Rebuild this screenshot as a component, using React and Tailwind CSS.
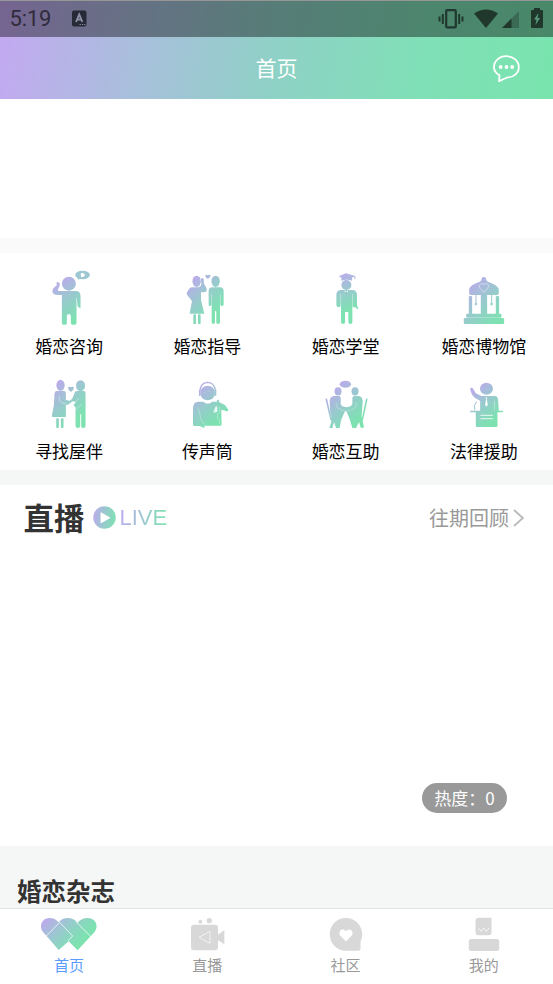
import { useState } from 'react'

function Gradient({ id, x1, y1, x2, y2 }) {
  return (
    <defs>
      <linearGradient id={id} gradientUnits="userSpaceOnUse" x1={x1} y1={y1} x2={x2} y2={y2}>
        <stop offset="0" stopColor="#bbabeb" />
        <stop offset="0.5" stopColor="#97cbcc" />
        <stop offset="0.85" stopColor="#83dcb8" />
        <stop offset="1" stopColor="#7de2b0" />
      </linearGradient>
    </defs>
  )
}

function ConsultIcon() {
  return (
    <svg viewBox="57.4 24 180 180" className="size-[60px]" fill="url(#g-consult)">
      <Gradient id="g-consult" x1="95" y1="75" x2="165" y2="180" />
      <circle cx="147" cy="71" r="21" />
      <path d="M111 66q9 0 9 9l-6 14q-1 4 4 4h50q14 0 14 16v36q-7-2-9-8l-2-24-1 0v76q0 5-6 5h-6q-5 0-5-5v-20q-1-7-6-7t-6 7v20q0 5-5 5h-5q-5 0-5-5v-84h-14q-17-2-14-14 2-8 13-15-2-7 0-10z" />
      <ellipse cx="188" cy="45" rx="22" ry="12.500" fill="#9dc7d1" />
      <path d="M172 50l3 9 9-5z" fill="#9dc7d1" />
      <path d="M183 39h7l6 6-5 6h-8z" fill="#fff" />
    </svg>
  )
}

function GuideIcon() {
  return (
    <svg viewBox="52.1 24 180 180" className="size-[60px]" fill="url(#g-guide)">
      <Gradient id="g-guide" x1="85" y1="70" x2="170" y2="155" />
      <ellipse cx="111" cy="64" rx="12.500" ry="17" />
      <path d="M99 82h18q8-2 8-10l-1-15q4-6 8 0l1 14 8 14q2 10-6 12h-11v22l10 42H90l7-38-15-19q-2-5 1-9l7-10q3-3 9-3z" />
      <rect x="101" y="163" width="8" height="29" rx="2" />
      <rect x="115" y="163" width="8" height="29" rx="2" />
      <path d="M137 47q2-5 7-1 5-4 9 0 1 4-8 11-8-4-8-10z" />
      <ellipse cx="168" cy="64" rx="12.500" ry="17" />
      <path d="M158 82h23q11 0 11 11v40q-1 6-5 6t-5-6v-31h-1v84q0 6-6 6t-5-6v-31q-2-5-4 0v31q0 6-5 6t-5-6v-84h-1v31q0 6-5 6-3 0-3-6V93q0-11 11-11z" />
    </svg>
  )
}

function SchoolIcon() {
  return (
    <svg viewBox="76.9 24 180 180" className="size-[60px]" fill="url(#g-school)">
      <Gradient id="g-school" x1="150" y1="40" x2="188" y2="150" />
      <path d="M145 49l22-9 27 8-9 5v9q-16-5-32 0v-9z" />
      <path d="M192 48h3v9h-3z" />
      <circle cx="168" cy="75" r="15" />
      <path d="M150 90h38q11 1 12 15v33l4 6-2 4-7-6q-7 1-8-3v-38h-1v86q0 5-6 5t-6-5v-30q-6-4-10 0v30q0 5-6 5t-6-5v-86h-1v34q0 7-6 7t-7-6v-31q0-14 12-15z" />
      <path d="M163 90l5 7 5-7v6h-10z" fill="#fff" />
    </svg>
  )
}

function MuseumIcon() {
  return (
    <svg viewBox="71.6 24 180 180" className="size-[60px]" fill="url(#g-museum)">
      <Gradient id="g-museum" x1="110" y1="75" x2="210" y2="180" />
      <path d="M154 60v-4q0-5 7-5t7 5v4q4 6 13 8 18 6 25 18v14q0 5-5 5h-79q-5 0-5-5V86q6-12 24-18 10-2 13-8z" />
      <path d="M147 76q6-9 14-3 9-6 15 3 1 8-15 21-15-12-14-21z" fill="none" stroke="#fff" strokeWidth="1.800" opacity=".7" />
      <rect x="116" y="108" width="10" height="57" rx="3" />
      <rect x="152" y="104" width="19" height="62" rx="3" />
      <rect x="197" y="108" width="10" height="57" rx="3" />
      <path d="M136 104h3v24l3 4-5 5-4-5 3-4zM183 104h3v24l3 4-5 5-4-5 3-4z" />
      <rect x="108" y="161" width="106" height="12" rx="4" />
      <rect x="101" y="174" width="121" height="18" rx="4" />
    </svg>
  )
}

function PartnerIcon() {
  return (
    <svg viewBox="57.4 15 180 180" className="size-[60px]" fill="url(#g-partner)">
      <Gradient id="g-partner" x1="105" y1="50" x2="190" y2="140" />
      <ellipse cx="122" cy="52" rx="12.500" ry="16.500" />
      <ellipse cx="182" cy="53" rx="13.500" ry="16.500" />
      <path d="M111 69h22q5 1 5 6v21l12 2 7-6 8-19q2-4 8-4h18q6 0 6 7v98q0 6-7 6t-6-6v-35h-3v35q0 6-7 6t-7-6v-56l-6-7 7-9-10-2-14 10-6 1v36H99q-4 0-3-4l6-31 2-36q1-7 7-7z" />
      <path d="M117 84l3 16q2 4 9 5l10 2M154 107l13-6 10-9M163 129l24-22" fill="none" stroke="#fff" strokeWidth="1.500" opacity=".7" />
      <rect x="109" y="151" width="8" height="29" rx="3" />
      <rect x="123" y="151" width="8" height="29" rx="3" />
      <path d="M144 59q4-5 9-1 6-4 9 1 0 7-9 13-8-6-9-13z" />
    </svg>
  )
}

function MicIcon() {
  return (
    <svg viewBox="472.1 15 180 180" className="size-[60px]" fill="url(#g-mic)">
      <Gradient id="g-mic" x1="530" y1="60" x2="605" y2="150" />
      <path d="M541 67q2-22 22-24 21 0 24 24" fill="none" stroke="url(#g-mic)" strokeWidth="4" />
      <circle cx="564" cy="75" r="22" />
      <rect x="538" y="65" width="5" height="19" rx="2" />
      <rect x="585" y="65" width="5" height="19" rx="2" />
      <path d="M552 73h8m3-3h10" stroke="#fff" strokeWidth="1" opacity=".5" />
      <path d="M536 101h15q13 12 27 0h14v-4q4-4 6 0v5l18 9 10 14q1 5-5 5l-16-5 1 45q0 3-5 3h-46l-1 7-14-6h-16q-4 0-4-5v-46q0-22 16-22z" />
      <path d="M536 122q8 22 6 29l11 18M600 116v20M594 135v15l5 4v15" fill="none" stroke="#fff" strokeWidth="1.500" opacity=".6" />
      <path d="M581 134l6-18 6-1v17z" fill="#fff" opacity=".8" />
    </svg>
  )
}

function HelpIcon() {
  return (
    <svg viewBox="46.9 15 180 180" className="size-[60px]" fill="url(#g-help)">
      <Gradient id="g-help" x1="95" y1="65" x2="175" y2="155" />
      <ellipse cx="135" cy="49" rx="17" ry="10.500" />
      <ellipse cx="113" cy="70" rx="10.500" ry="12.500" />
      <ellipse cx="164" cy="70" rx="10.500" ry="12.500" />
      <path d="M101 84h16q4 1 4 6v18l4 7 13 3 13-3 5-7V90q0-5 5-6h14q11 1 12 15l-3 44 7 36h-10l-5-17-9 18h-11l-8-26-9-23-3-2-3 2-11 26-4 23h-11l-6-18-5 18h-9l6-19-4-17-1-45q1-14 13-15z" />
      <path d="M78 94l14 60M199 94l-13 60" fill="none" stroke="url(#g-help)" strokeWidth="5" strokeLinecap="round" />
      <path d="M85 105l8 45M192 105l-8 45M107 104l3 15 16 8 10 2M169 104l-4 15-14 8-11 2" fill="none" stroke="#fff" strokeWidth="1.300" opacity=".65" />
    </svg>
  )
}

function LawIcon() {
  return (
    <svg viewBox="461.6 15 180 180" className="size-[60px]" fill="url(#g-law)">
      <Gradient id="g-law" x1="515" y1="65" x2="590" y2="150" />
      <ellipse cx="559" cy="62" rx="19.500" ry="18" />
      <path d="M510 62q3-5 8-1l9 15 17 8h40q9 1 10 11l2 33h12q2 2 0 5h-16v41q0 3-4 3h-57q-4 0-4-3v-41h-16q-3-3 0-5h29V98l-15-8q-13-11-15-28z" />
      <path d="M524 127l-1-15 6-11" fill="none" stroke="url(#g-law)" strokeWidth="3" />
      <path d="M557 88h4l-1 6 3 16-4 6-4-6 3-16z" fill="#fff" />
      <path d="M541 142h37M541 152h37" stroke="#fff" strokeWidth="2.500" />
      <path d="M583 99v29" stroke="#fff" strokeWidth="1.500" opacity=".7" />
    </svg>
  )
}

const MENU = [
  { name: '婚恋咨询', Icon: ConsultIcon },
  { name: '婚恋指导', Icon: GuideIcon },
  { name: '婚恋学堂', Icon: SchoolIcon },
  { name: '婚恋博物馆', Icon: MuseumIcon },
  { name: '寻找屋伴', Icon: PartnerIcon },
  { name: '传声筒', Icon: MicIcon },
  { name: '婚恋互助', Icon: HelpIcon },
  { name: '法律援助', Icon: LawIcon },
]

function HomeTabIcon() {
  return (
    <svg viewBox="120 51 172 102" className="h-[34px] w-[57.3px]" fill="url(#g-home)">
      <Gradient id="g-home" x1="140" y1="55" x2="225" y2="140" />
      <path d="M139 107l-10-11c-12-14-6-42 20-42q16 0 27 13 10-13 28-13 16 0 29 14 12-14 30-14c26 0 34 27 20 43l-50 54-27-27-30 26z" />
      <path d="M137 110l42-43 39 41-14 15M226 63l48 48" fill="none" stroke="#fff" strokeWidth="2.200" />
    </svg>
  )
}

function LiveTabIcon() {
  return (
    <svg viewBox="570 51 104 102" className="h-[34px] w-[34.7px]" fill="#d8d8d8">
      <circle cx="601" cy="65" r="5.500" />
      <circle cx="628" cy="62" r="8" />
      <rect x="573" y="74" width="81" height="77" rx="9" />
      <path d="M652 105l21-14v42l-21-14z" />
      <path d="M630 94v36l-33-18z" fill="none" stroke="#fff" strokeWidth="2" />
    </svg>
  )
}

function CommunityTabIcon() {
  return (
    <svg viewBox="0 0 34 34" className="size-[34px]" fill="#d8d8d8">
      <path d="M17 1C7.500 1 .8 8.300.8 17.300S8 33.800 17 33.800h12.500c1.300 0 2-.8 2-2v-7c1.100-2.400 1.700-4.800 1.700-7.500C33.200 8.300 26 1 17 1z" />
      <path d="M17 24.500l-5.400-5.400c-3-3.300.1-7.700 3.600-6.200q1.100.4 1.800 1.400.7-1 1.800-1.400c3.500-1.500 6.600 2.900 3.600 6.200z" fill="#fff" />
    </svg>
  )
}

function MineTabIcon() {
  return (
    <svg viewBox="0 0 34 34" className="size-[34px]" fill="#d8d8d8">
      <path d="M12 .8h12.500v14.500q0 3-3 3h-10q-3 0-3-3V4q0-3.200 3.500-3.200z" />
      <path d="M11.500 11l2.700 3.500 2.500-3.500 2.700 3.500L22 11" fill="none" stroke="#fff" strokeWidth=".7" />
      <rect x="1.800" y="22" width="30.400" height="12" rx="2.500" />
    </svg>
  )
}

const TABS = [
  { id: 'home', name: '首页', Icon: HomeTabIcon },
  { id: 'live', name: '直播', Icon: LiveTabIcon },
  { id: 'community', name: '社区', Icon: CommunityTabIcon },
  { id: 'mine', name: '我的', Icon: MineTabIcon },
]

function StatusBar() {
  return (
    <div className="flex h-[37px] items-center border-t border-[#969696] bg-black/40 pl-[9.500px] pr-[10px]">
      <span className="font-['Roboto',sans-serif] text-[22px] leading-none tracking-[-0.2px] text-[#302b3d]">5:19</span>
      <svg viewBox="0 0 15 17" className="mb-[2px] ml-[20.500px] h-[17px] w-[15px]">
        <rect y=".5" width="14.500" height="16" rx="2" fill="#282936" />
        <path d="M4 12L7.200 4.500 10.400 12M5.200 9.500h4" fill="none" stroke="#8b8fa5" strokeWidth="1.900" />
        <path d="M7.500 14.500h6" stroke="#8b8fa5" strokeDasharray="1.300 1" />
      </svg>
      <svg viewBox="0 0 26 20" className="ml-auto h-[20px] w-[26px]" fill="none" stroke="#20382f">
        <rect x="8.200" y="1.200" width="9.600" height="17.200" rx="1" strokeWidth="2.200" />
        <path d="M4.800 5v10M21.200 5v10M1.500 7.500v5M24.500 7.500v5" strokeWidth="2" />
      </svg>
      <svg viewBox="0 0 24 19" className="mb-[1px] ml-[10px] h-[19px] w-[24px]">
        <path d="M12 19L0 4.500Q12-3.500 24 4.500z" fill="#20382c" />
      </svg>
      <svg viewBox="0 0 17 17" className="ml-[4px] h-[17px] w-[17px]">
        <path d="M17 0v17H0z" fill="#3a6a54" />
        <path d="M9.500 7.500V17H0z" fill="#20382c" />
      </svg>
      <svg viewBox="0 0 12 20" className="mb-[2px] ml-[12px] h-[20px] w-[12px]">
        <path d="M3 0h6v2h2q1 0 1 1v16q0 1-1 1H1q-1 0-1-1V3q0-1 1-1h2z" fill="#20382c" />
        <path d="M7.500 5L3 11.500h2.500L4.500 17 9 10H6.500z" fill="#5a9a7b" />
      </svg>
    </div>
  )
}

function App() {
  const [activeTab, setActiveTab] = useState('home')

  return (
    <div className="flex h-[984px] w-full flex-col overflow-hidden bg-white font-['Noto_Sans_CJK_SC',sans-serif]">
      <header className="h-[98.500px] shrink-0 bg-[linear-gradient(100deg,#c4a8f2_0%,#a9bedc_25%,#8fd1c6_50%,#80dfb7_75%,#79e4ae_100%)]">
        <StatusBar />
        <div className="grid h-[61.500px] grid-cols-3 items-center">
          <h1 className="col-start-2 text-center text-[21px] leading-none text-white">首页</h1>
          <button className="mr-[32.500px] justify-self-end">
            <svg viewBox="0 0 28 28" className="size-[28px]" fill="none" stroke="#fff" strokeWidth="1.800">
              <path d="M7.500 21.300C3.800 19.300 2 16.400 2 13.200 2 7 7.300 2.200 14.300 2.200S26.800 7 26.800 13.200c0 6-5.400 10.200-11.600 10.300L7 27.100z" strokeLinejoin="round" />
              <g fill="#fff" stroke="none">
                <circle cx="8.700" cy="13" r="1.900" />
                <circle cx="14.500" cy="13" r="1.900" />
                <circle cx="20.200" cy="13" r="1.900" />
              </g>
            </svg>
          </button>
        </div>
      </header>

      <div className="h-[139.500px] shrink-0" />
      <div className="h-[15px] shrink-0 bg-[#fafafa]" />

      <section className="grid h-[217px] shrink-0 grid-cols-4 grid-rows-[105px_104px] pt-[15px]">
        {MENU.map(({ name, Icon }) => (
          <button key={name} className="flex flex-col items-center">
            <Icon />
            <span className="mt-[6px] text-[17px] leading-[24px] whitespace-nowrap text-black">{name}</span>
          </button>
        ))}
      </section>

      <div className="h-[15px] shrink-0 bg-[#f5f7f7]" />

      <section className="flex h-[361px] shrink-0 flex-col">
        <div className="flex h-[65px] items-center pr-[29px] pl-[23.500px]">
          <h2 className="text-[30.500px] leading-none font-bold text-[#333]">直播</h2>
          <svg viewBox="0 0 23 23" className="ml-[8px] size-[23px]">
            <Gradient id="g-play" x1="0" y1="10" x2="24" y2="14" />
            <circle cx="11.500" cy="11.500" r="11.200" fill="url(#g-play)" />
            <path d="M8 6.800v10l8.800-5z" fill="#fff" stroke="#fff" strokeLinejoin="round" />
          </svg>
          <span className="ml-[4px] bg-[linear-gradient(100deg,#bfa9f0,#97cbcc_55%,#7be4ae)] bg-clip-text font-['Liberation_Sans',sans-serif] text-[22px] leading-none text-transparent">LIVE</span>
          <button className="ml-auto flex items-center text-[20px] leading-none text-[#999]">
            往期回顾
            <svg viewBox="0 0 11 18" className="ml-[4px] h-[18px] w-[11px]" fill="none" stroke="#bbb" strokeWidth="1.800">
              <path d="M1 1l8.800 8L1 17" />
            </svg>
          </button>
        </div>
        <div className="mt-auto mr-[46px] mb-[33.500px] flex h-[29.500px] w-[85px] items-center justify-center self-end rounded-full bg-[#999] text-[17px] leading-none whitespace-nowrap text-white">
          热度：0
        </div>
      </section>

      <section className="h-[62px] shrink-0 overflow-hidden bg-[#f5f7f7] pt-[26.500px] pl-[17px]">
        <h2 className="text-[24.500px] leading-[36px] font-bold text-[#333]">婚恋杂志</h2>
      </section>

      <nav className="grid h-[76px] shrink-0 grid-cols-4 border-t border-[#e2e3e3] bg-white">
        {TABS.map(({ id, name, Icon }) => (
          <button key={id} onClick={() => setActiveTab(id)} className="flex flex-col items-center pt-[8px]">
            <Icon />
            <span className={`mt-[4px] text-[15px] leading-[20px] ${activeTab === id ? 'text-[#5a9cff]' : 'text-[#999]'}`}>
              {name}
            </span>
          </button>
        ))}
      </nav>
    </div>
  )
}

export default App
